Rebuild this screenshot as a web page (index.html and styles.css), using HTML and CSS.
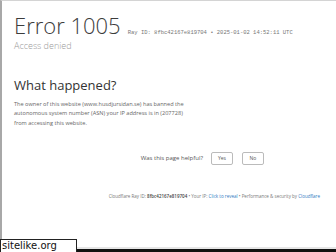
FILE: index.html
```html
<!DOCTYPE html>
<html lang="en">
<head>
    <meta charset="UTF-8">
    <title>Access denied | www.husdjursidan.se used Cloudflare to restrict access</title>
    <link rel="stylesheet" href="styles.css">
</head>
<body>
    <div class="frame">
        <div class="header">
            <div class="title-row">
                <h1 class="error-code">Error 1005</h1>
                <span class="ray-id">Ray ID: 8fbc42167e819704 &bull; 2025-01-02 14:52:11 UTC</span>
            </div>
            <div class="subtitle">Access denied</div>
        </div>

        <div class="section">
            <h2 class="section-title">What happened?</h2>
            <p class="section-text">The owner of this website (www.husdjursidan.se) has banned the autonomous system number (ASN) your IP address is in (207728) from accessing this website.</p>
        </div>

        <div class="feedback">
            <span class="feedback-label">Was this page helpful?</span>
            <button class="feedback-btn">Yes</button>
            <button class="feedback-btn">No</button>
        </div>

        <div class="footer">
            Cloudflare Ray ID: <strong>8fbc42167e819704</strong> &bull; Your IP: <a href="#">Click to reveal</a> &bull; Performance &amp; security by <a href="#">Cloudflare</a>
        </div>
    </div>
    <div class="watermark">sitelike.org</div>
</body>
</html>
```

FILE: styles.css
```css
html, body {
    margin: 0;
    height: 100%;
}

body {
    font-family: "Open Sans", "Noto Sans", sans-serif;
    background: #fff;
    color: #404040;
    overflow: hidden;
    position: relative;
}

.frame {
    box-sizing: border-box;
    height: 252px;
    border-left: 2px solid #a8a8a8;
    border-top: 1px solid #d4d4d4;
    border-bottom: 3px solid #111;
    box-shadow: inset 0 -2px 0 #e6e6e6;
    padding: 9px 12px 0 12px;
}

.title-row {
    display: flex;
    align-items: baseline;
    gap: 7px;
}

.error-code {
    margin: 0;
    font-size: 22px;
    font-weight: 300;
    line-height: 30px;
    color: #3c3c3c;
}

.ray-id {
    font-family: "Liberation Mono", monospace;
    font-size: 5.5px;
    color: #777;
}

.subtitle {
    font-size: 9px;
    font-weight: 300;
    color: #9a9a9a;
    line-height: 11px;
}

.section {
    margin-top: 26px;
}

.section-title {
    margin: 0;
    font-size: 13px;
    font-weight: 400;
    color: #333;
    line-height: 17px;
}

.section-text {
    margin: 6px 0 0 0;
    width: 180px;
    font-size: 5.6px;
    line-height: 9.3px;
    color: #666;
}

.feedback {
    margin-top: 24px;
    display: flex;
    justify-content: flex-end;
    align-items: center;
    gap: 9px;
    padding-right: 60px;
}

.feedback-label {
    font-size: 6px;
    color: #555;
    margin-right: -1px;
}

.feedback-btn {
    font-family: inherit;
    font-size: 5px;
    color: #555;
    background: #fff;
    border: 1px solid #bbb;
    border-radius: 2px;
    width: 22px;
    height: 13px;
    padding: 0;
}

.footer {
    margin-top: 28px;
    text-align: right;
    padding-right: 4px;
    font-size: 4.5px;
    color: #777;
}

.footer strong {
    color: #444;
    font-weight: 600;
}

.footer a {
    color: #2f7bbf;
    text-decoration: none;
}

.watermark {
    position: absolute;
    left: 0;
    bottom: 0;
    box-sizing: border-box;
    width: 77px;
    height: 13px;
    border: 1px solid #222;
    border-bottom: none;
    background: #fff;
    font-family: "DejaVu Sans", sans-serif;
    font-size: 10px;
    line-height: 11px;
    color: #111;
    padding-left: 1px;
}
```
